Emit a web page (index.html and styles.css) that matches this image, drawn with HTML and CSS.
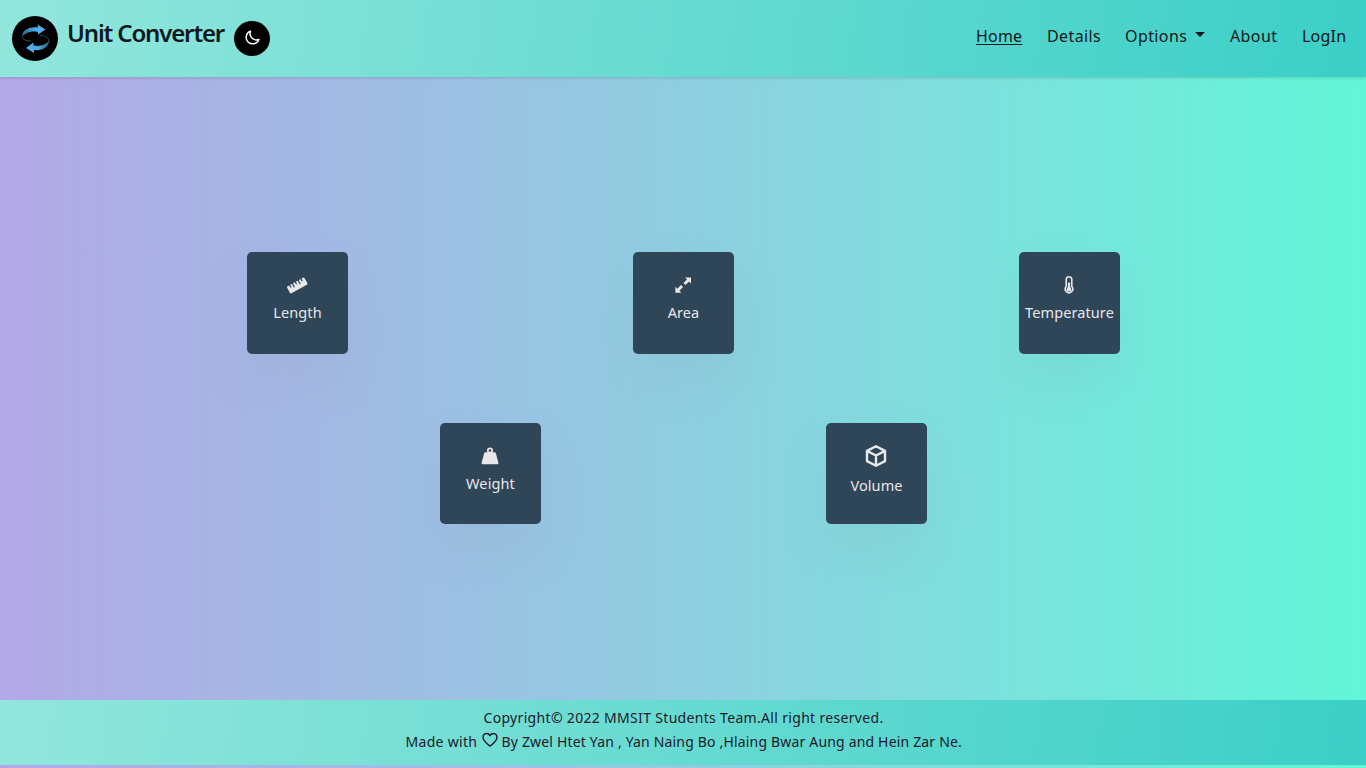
FILE: index.html
```html
<!DOCTYPE html>
<html lang="en">
<head>
<meta charset="utf-8">
<title>Unit Converter</title>
<link rel="stylesheet" href="styles.css">
</head>
<body>
<header class="navbar">
  <a class="logo"><svg width="46" height="46" viewBox="0 0 46 46">
    <defs><linearGradient id="g"><stop offset="0" stop-color="#286b92"/><stop offset=".6" stop-color="#4fb0ed"/></linearGradient>
    <linearGradient id="h"><stop offset="0" stop-color="#4fb0ed"/><stop offset=".5" stop-color="#4fa9e3"/><stop offset="1" stop-color="#286b82"/></linearGradient></defs>
    <path fill="url(#g)" d="M10.500 20.500C10 14 17 10.500 26 11.500L25.500 8.500L33.500 13.500L26 18.500L26 16C19 14.500 13 17 10.500 20.500Z"/>
    <path fill="url(#h)" d="M37 24.500C37.500 31 30 35 22 34L22 37L14 32L21.500 26.500L21.500 29.500C28 31 34 28.500 37 24.500Z"/>
    <path fill="none" stroke="#25545f" stroke-width="1" d="M10.500 19C9.500 23 13 25 19 25M28 19.500C34 19.500 37 22 37 26"/>
  </svg></a>
  <span class="brand">Unit Converter</span>
  <button class="mode"><svg width="15" height="15" viewBox="0 0 16 16" fill="none" stroke="#fff" stroke-width="1.600" stroke-linejoin="round"><path d="M5.800 1.200A7 7 0 1 0 14.800 10.200A7 7 0 0 1 5.800 1.200Z"/></svg></button>
  <nav class="links">
    <a class="home">Home</a><a class="details">Details</a><a class="options">Options</a><i class="caret"></i><a class="about">About</a><a class="login">LogIn</a>
  </nav>
</header>
<main class="board">
  <div class="row">
    <a class="card"><svg width="22" height="22" viewBox="0 0 22 22"><g transform="rotate(-29 11 11)" ><rect x="1" y="7.500" width="20" height="8" rx="1.200" fill="#e8e8e8"/><path d="M4.500 7v3.200M7.700 7v4.700M11 7v3.200M14.300 7v4.700M17.500 7v3.200" stroke="#2f4558" stroke-width="1.200"/></g></svg><span class="length">Length</span></a>
    <a class="card"><svg width="22" height="22" viewBox="0 0 22 22" fill="#e8e8e8"><path d="M13 3.500h6v6l-2-2-3.600 3.600-2-2L15 5.500zM3.400 18.700v-6l2 2L9 11.100l2 2-3.600 3.600 2 2z"/></svg><span class="area">Area</span></a>
    <a class="card"><svg width="22" height="22" viewBox="0 0 22 22"><path d="M8.200 5.500a2.800 2.800 0 0 1 5.600 0v7.100a3.700 3.700 0 1 1-5.600 0z" fill="none" stroke="#e8e8e8" stroke-width="1.600"/><circle cx="11" cy="15.200" r="2.300" fill="#e8e8e8"/><path d="M11 8.500v6" stroke="#e8e8e8" stroke-width="2.200"/></svg><span class="temperature">Temperature</span></a>
  </div>
  <div class="row second">
    <a class="card"><svg width="22" height="22" viewBox="0 0 22 22"><circle cx="11" cy="5.500" r="2.200" fill="none" stroke="#e8e8e8" stroke-width="1.700"/><path fill="#e8e8e8" d="M6.500 7.300h9q1.100 0 1.400 1.100l2.500 9.300q.3 1.500-1.200 1.500H3.800q-1.500 0-1.200-1.500l2.500-9.300q.3-1.100 1.400-1.100z"/></svg><span class="weight">Weight</span></a>
    <a class="card volume-card"><svg width="24" height="24" viewBox="0 0 24 24" fill="none" stroke="#e8e8e8" stroke-width="2.400" stroke-linejoin="round"><path d="M12 2.200 21 6.900v10.200l-9 4.700-9-4.700V6.900zM3 6.900l9 4.600 9-4.600M12 11.500v10.300"/></svg><span class="volume">Volume</span></a>
  </div>
</main>
<footer class="footer">
  <p><span class="copy">Copyright© 2022 MMSIT Students Team.All right reserved.</span></p>
  <p><span class="made">Made with</span><svg class="heart" width="16" height="16" viewBox="0 0 16 16" fill="none" stroke="#1a1a2b" stroke-width="1.400" stroke-linejoin="round"><path d="M8 14.200C4.500 11.300 1 8.700 1 5.200C1 1.200 6 .300 8 3.600C10 .300 15 1.200 15 5.200C15 8.700 11.500 11.300 8 14.200Z"/></svg><span class="by">By Zwel Htet Yan , Yan Naing Bo ,Hlaing Bwar Aung and Hein Zar Ne.</span></p>
</footer>
</body>
</html>
```
FILE: styles.css
```css
* { box-sizing: border-box; }
body { margin: 0; height: 768px; overflow: hidden; display: flex; flex-direction: column; font-family: "Noto Sans", sans-serif; color: #101820; background: linear-gradient(90deg, #b2a8e6 0%, #9bc2e3 35%, #7de0dd 71%, #62f6d8 100%); }
.navbar { height: 77px; flex: none; display: flex; align-items: flex-start; padding-left: 12px; background: linear-gradient(98deg, #92e6dc, #3bcfc7); box-shadow: 0 1px 3px rgba(0,0,0,.15); }
.logo { width: 46px; height: 45px; margin-top: 16px; border-radius: 50%; background: #000; overflow: hidden; }
.logo svg, .card svg, .mode svg { display: block; }
.brand { width: 159px; margin: 15px 8px 0 9px; font-size: 24px; line-height: 36px; font-weight: 600; letter-spacing: -1.150px; white-space: nowrap; }
.mode { width: 36px; height: 35px; margin-top: 21px; padding: 0 0 3px; border: 0; border-radius: 50%; background: #000; display: flex; align-items: center; justify-content: center; }
.links { display: flex; margin-left: auto; padding: 24px 19px 0 0; font-size: 16px; line-height: 24px; white-space: nowrap; letter-spacing: .2px; }
.home { width: 46px; margin-left: -1px; text-decoration: underline; text-underline-offset: 2px; }
.details { width: 54px; margin-left: 25px; letter-spacing: .4px; }
.options { width: 62px; margin-left: 24px; letter-spacing: .4px; }
.about { width: 48px; margin-left: 25px; letter-spacing: .4px; }
.login { width: 45px; margin-left: 24px; }
.caret { margin: 8px 0 0 8px; border: 5.500px solid transparent; border-top-color: #101820; border-bottom: 0; height: 0; }
.board { height: 623px; flex: none; padding-top: 175px; }
.row { display: flex; justify-content: center; gap: 285px; padding-left: 1px; }
.second { margin-top: 69px; }
.card { width: 101px; height: 102px; padding-top: 22px; border-radius: 5px; background: #2f4558; color: #e8e8e8; display: flex; flex-direction: column; align-items: center; font-size: 14.500px; line-height: 22px; white-space: nowrap; letter-spacing: .1px; box-shadow: 0 25px 50px rgba(140,140,165,.12); }
.second .card { height: 101px; }
.card svg { flex: none; margin-right: 1px; }
.card span { margin-top: 5px; }
.card.volume-card { padding-top: 21px; }
.volume-card .volume { margin-top: 6px; }
.footer { height: 65px; flex: none; padding-top: 6px; background: linear-gradient(98deg, #92e6dc, #3bcfc7); font-size: 14px; line-height: 24px; color: #1a1a2b; }
.footer p { margin: 0; display: flex; justify-content: center; white-space: nowrap; padding-left: 1px; }
.copy { width: 400px; letter-spacing: .320px; }
.made { width: 72px; letter-spacing: .3px; }
.heart { margin: 2px 4px 0; }
.by { width: 460px; letter-spacing: .175px; }
```
